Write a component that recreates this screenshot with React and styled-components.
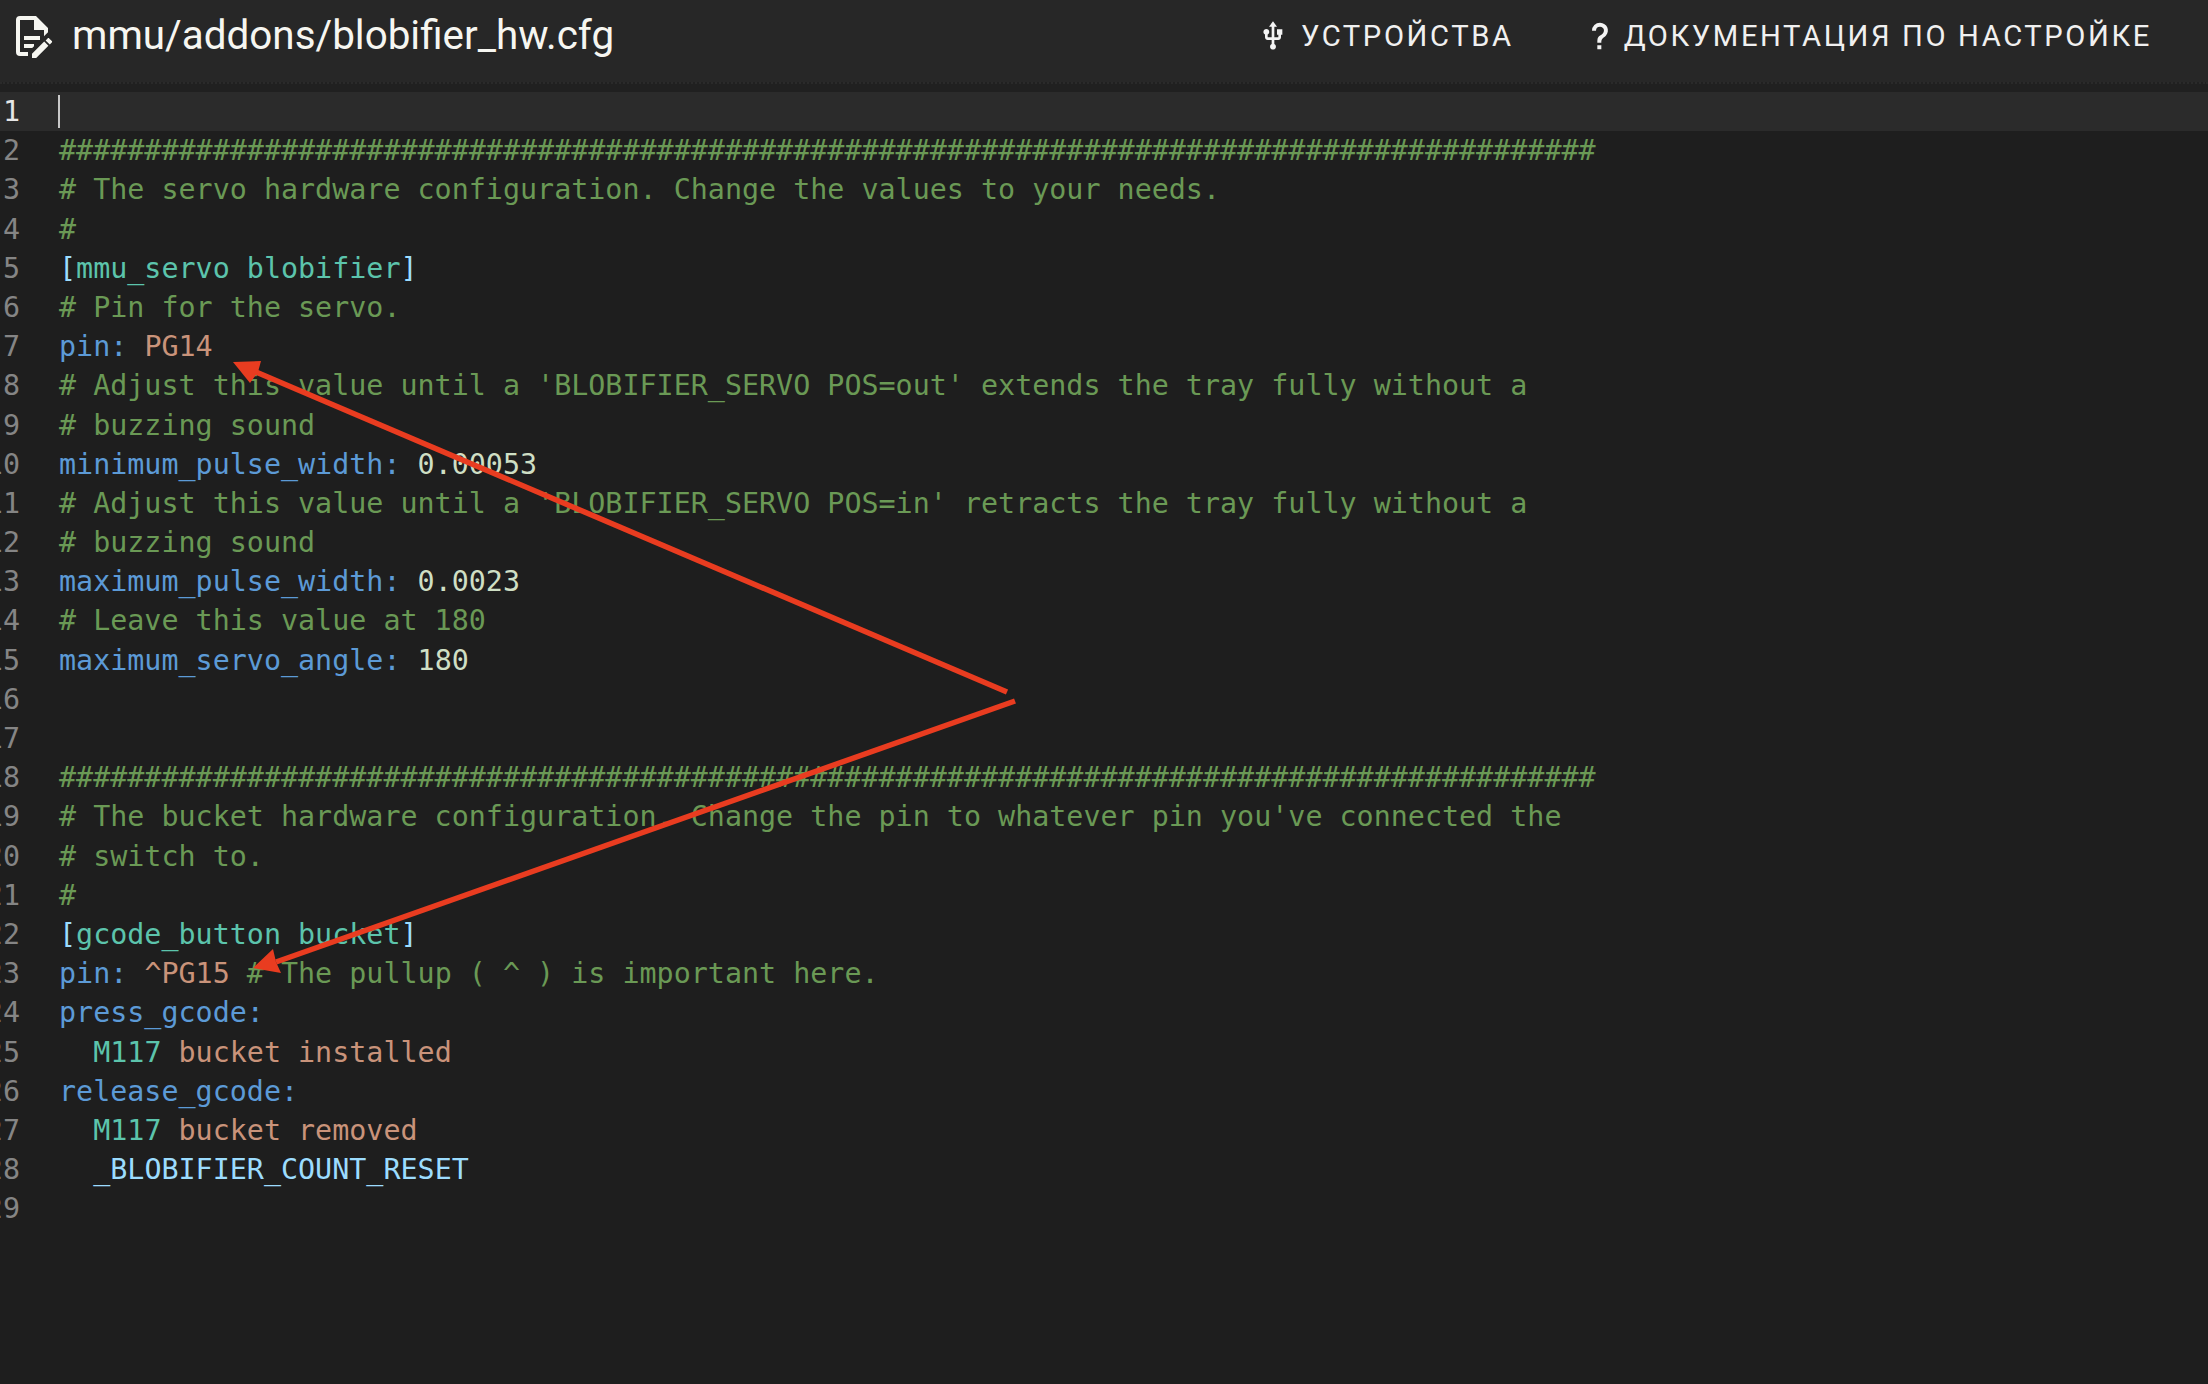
import React from "react";
import styled, { createGlobalStyle } from "styled-components";

const Global = createGlobalStyle`
  html, body { margin: 0; padding: 0; background: #1e1e1e; }
  body { width: 2208px; height: 1384px; overflow: hidden; }
`;
const Page = styled.div`
  position: relative; width: 2208px; height: 1384px; background: #1e1e1e;
  display: flex; flex-direction: column; overflow: hidden;
`;
const Toolbar = styled.header`
  flex: none; height: 82px; background: #272727; display: flex; align-items: flex-start;
  padding: 0 56px 0 8px; box-sizing: border-box; font-family: Roboto, sans-serif; color: #fff;
`;
const Title = styled.h1`
  margin: 0; font-size: 40.4px; font-weight: 400; line-height: 72px; display: flex; align-items: center; gap: 16px; flex: 1; color: #f6f6f1;
`;
const NavButton = styled.div`
  display: flex; align-items: center; gap: ${p => p.$gap}px; margin-left: 70px; height: 72px;
  font-size: 29.2px; letter-spacing: 2.6px; color: #f0f0f0;
`;
const Icon = styled.svg` flex: none; display: block; `;
const Strip = styled.div`
  flex: none; height: 10px; box-sizing: border-box; background: #202020; border-top: 2px dotted #2a2a2a;
`;
const Editor = styled.main`
  flex: 1; font-family: "DejaVu Sans Mono", monospace; font-size: 28.36px; line-height: 39.2px; white-space: pre;
`;
const Row = styled.div`
  display: flex; height: 39.2px; background: ${p => p.$active ? "#2b2b2b" : "transparent"};
`;
const Gutter = styled.div`
  width: 20px; flex: none; overflow: hidden; direction: rtl;
  color: ${p => p.$active ? "#e6e6e6" : "#858585"}; margin-right: 39px;
`;
const Code = styled.div` position: relative; flex: 1; `;
const Caret = styled.span`
  position: absolute; left: -1px; top: 3px; width: 2px; height: 33px; background: #c8c8c8;
`;
const Comment = styled.span` color: #6a9955; `;
const Key = styled.span` color: #5c9ad6; `;
const Str = styled.span` color: #c9937a; `;
const Num = styled.span` color: #cfdfc4; `;
const Sect = styled.span` color: #5cc4ac; `;
const Bracket = styled.span` color: #9cdcfe; `;
const Overlay = styled.svg` position: absolute; left: 0; top: 0; pointer-events: none; `;

const H = "#".repeat(90);
const section = (n) => <><Bracket>[</Bracket><Sect>{n}</Sect><Bracket>]</Bracket></>;
const lines = [
  null,
  <Comment>{H}</Comment>,
  <Comment># The servo hardware configuration. Change the values to your needs.</Comment>,
  <Comment>#</Comment>,
  section("mmu_servo blobifier"),
  <Comment># Pin for the servo.</Comment>,
  <><Key>pin:</Key> <Str>PG14</Str></>,
  <Comment># Adjust this value until a 'BLOBIFIER_SERVO POS=out' extends the tray fully without a</Comment>,
  <Comment># buzzing sound</Comment>,
  <><Key>minimum_pulse_width:</Key> <Num>0.00053</Num></>,
  <Comment># Adjust this value until a 'BLOBIFIER_SERVO POS=in' retracts the tray fully without a</Comment>,
  <Comment># buzzing sound</Comment>,
  <><Key>maximum_pulse_width:</Key> <Num>0.0023</Num></>,
  <Comment># Leave this value at 180</Comment>,
  <><Key>maximum_servo_angle:</Key> <Num>180</Num></>,
  "",
  "",
  <Comment>{H}</Comment>,
  <Comment># The bucket hardware configuration. Change the pin to whatever pin you've connected the</Comment>,
  <Comment># switch to.</Comment>,
  <Comment>#</Comment>,
  section("gcode_button bucket"),
  <><Key>pin:</Key> <Str>^PG15</Str> <Comment># The pullup ( ^ ) is important here.</Comment></>,
  <Key>press_gcode:</Key>,
  <>  <Sect>M117</Sect> <Str>bucket installed</Str></>,
  <Key>release_gcode:</Key>,
  <>  <Sect>M117</Sect> <Str>bucket removed</Str></>,
  <>  <Bracket>_BLOBIFIER_COUNT_RESET</Bracket></>,
  "",
];

const FileIcon = () => (
  <Icon width="48" height="48" viewBox="0 0 24 24" fill="#f6f6f1">
    <path d="M8,12H16V14H8V12M10,20H6V4H13V9H18V12.1L20,10.1V8L14,2H6A2,2 0 0,0 4,4V20A2,2 0 0,0 6,22H10V20M8,18H12.1L13,17.1V16H8V18M20.2,13C20.3,13 20.5,13.1 20.6,13.2L21.9,14.5C22.1,14.7 22.1,15.1 21.9,15.3L20.9,16.3L18.8,14.2L19.8,13.2C19.9,13.1 20,13 20.2,13M20.2,16.9L14.1,23H12V20.9L18.1,14.8L20.2,16.9Z" />
    <path d="M13,3H14L19,8V9H13Z" />
  </Icon>
);
const UsbIcon = () => (
  <Icon width="32" height="32" viewBox="0 0 24 24" fill="#f4f4f4">
    <path d="M15,7V11H16V13H13V5H15L12,1L9,5H11V13H8V10.9C8.7,10.5 9.2,9.8 9.2,9C9.2,7.8 8.2,6.8 7,6.8C5.8,6.8 4.8,7.8 4.8,9C4.8,9.8 5.3,10.5 6,10.9V13C6,14.1 6.9,15 8,15H11V18.05C10.3,18.4 9.8,19.2 9.8,20C9.8,21.2 10.8,22.2 12,22.2C13.2,22.2 14.2,21.2 14.2,20C14.2,19.1 13.7,18.4 13,18.05V15H16C17.1,15 18,14.1 18,13V11H19V7H15Z" />
  </Icon>
);
const HelpIcon = () => (
  <Icon width="32" height="32" viewBox="0 0 24 24" fill="#f4f4f4">
    <path d="M10,19H13V22H10V19M12,2C17.35,2.22 19.68,7.62 16.5,11.67C15.67,12.67 14.33,13.33 13.67,14.17C13,15 13,16 13,17H10C10,15.33 10,13.92 10.67,12.92C11.33,11.92 12.67,11.33 13.5,10.67C15.92,8.43 15.32,5.26 12,5A3,3 0 0,0 9,8H6A6,6 0 0,1 12,2Z" />
  </Icon>
);

export default function App() {
  return (
    <Page>
      <Global />
      <Toolbar>
        <Title><FileIcon />mmu/addons/blobifier_hw.cfg</Title>
        <NavButton $gap={12}><UsbIcon />УСТРОЙСТВА</NavButton>
        <NavButton $gap={8}><HelpIcon />ДОКУМЕНТАЦИЯ ПО НАСТРОЙКЕ</NavButton>
      </Toolbar>
      <Strip />
      <Editor>
        {lines.map((l, i) => (
          <Row key={i} $active={i === 0}>
            <Gutter $active={i === 0}>{i + 1}</Gutter>
            <Code>{i === 0 ? <Caret /> : l}</Code>
          </Row>
        ))}
      </Editor>
      <Overlay width="2208" height="1384" viewBox="0 0 2208 1384">
        <path d="M1007 692L256 372" stroke="#e93c20" strokeWidth="5.5" />
        <path d="M233 362L261 361L258 372L250 383z" fill="#e93c20" />
        <path d="M1015 701L276 962" stroke="#e93c20" strokeWidth="5.5" />
        <path d="M253 968L273 949L276 962L281 973z" fill="#e93c20" />
      </Overlay>
    </Page>
  );
}
